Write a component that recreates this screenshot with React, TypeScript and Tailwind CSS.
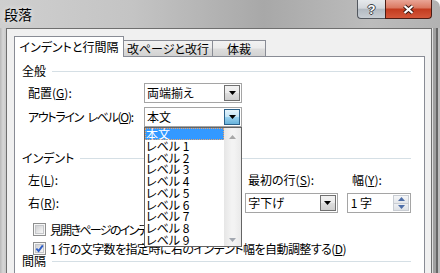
import React from "react";

const Tri = ({ color = "#000" }: { color?: string }) => (
  <svg width="7" height="4" viewBox="0 0 7 4">
    <polygon points="0,0 7,0 3.5,4" fill={color} />
  </svg>
);

const SmallTri = ({ up, color }: { up?: boolean; color: string }) => (
  <svg width="7" height="4" viewBox="0 0 7 4">
    <polygon points={up ? "0,4 7,4 3.5,0" : "0,0 7,0 3.5,4"} fill={color} />
  </svg>
);

const U = ({ c }: { c: string }) => (
  <span className="underline underline-offset-[1px]">{c}</span>
);

function Section({ label, className = "" }: { label: string; className?: string }) {
  return (
    <div className={`flex items-center ${className}`}>
      <span className="whitespace-nowrap">{label}</span>
      <div className="ml-[6px] h-px flex-1 bg-[#d5dfe5]" />
    </div>
  );
}

function Select({
  text,
  className = "",
  focused = false,
  children,
}: {
  text: string;
  className?: string;
  focused?: boolean;
  children?: React.ReactNode;
}) {
  return (
    <div className={`relative flex h-[20px] items-stretch border border-[#a5a5a5] bg-white ${className}`}>
      <span className="flex flex-1 items-center whitespace-nowrap pl-[2px]">{text}</span>
      <div
        className={
          focused
            ? "my-px mr-px flex w-[16px] items-center justify-center border border-[#2c628b] bg-[linear-gradient(180deg,#e5f4fc_0%,#c4e5f6_48%,#98d1ef_52%,#68b3db_100%)]"
            : "my-px mr-px flex w-[16px] items-center justify-center border border-[#707070] bg-[linear-gradient(180deg,#f2f2f2_0%,#ebebeb_48%,#dddddd_52%,#cfcfcf_100%)]"
        }
      >
        <Tri />
      </div>
      {children}
    </div>
  );
}

function Spin({ text, className = "" }: { text: string; className?: string }) {
  return (
    <div className={`flex h-[20px] items-stretch border border-[#a5a5a5] bg-white ${className}`}>
      <span className="flex flex-1 items-center whitespace-nowrap pl-[3px]">{text}</span>
      <div className="my-px mr-px flex w-[16px] flex-col">
        <div className="flex flex-1 items-center justify-center border border-[#c9cdd3] bg-[linear-gradient(180deg,#f5f6f8,#e3e6ea)]">
          <SmallTri up color="#4e6ea8" />
        </div>
        <div className="flex flex-1 items-center justify-center border border-t-0 border-[#c9cdd3] bg-[linear-gradient(180deg,#eef0f3,#dde1e6)]">
          <SmallTri color="#4e6ea8" />
        </div>
      </div>
    </div>
  );
}

function Check({ checked = false }: { checked?: boolean }) {
  return (
    <div className="relative flex h-[13px] w-[13px] shrink-0 items-center justify-center border border-[#8e8f8f] bg-[#f6f6f6]">
      <div className="h-[9px] w-[9px] border border-[#c4c6c9] bg-[linear-gradient(135deg,#cfd0d2,#f7f7f7)]" />
      {checked && (
        <svg className="absolute left-[1px] top-[1px]" width="9" height="9" viewBox="0 0 9 9">
          <path d="M1.3 4.6 L3.6 7 L7.8 1.4" fill="none" stroke="#2f5ec6" strokeWidth="1.9" />
        </svg>
      )}
    </div>
  );
}

const levels = ["本文", "レベル 1", "レベル 2", "レベル 3", "レベル 4", "レベル 5", "レベル 6", "レベル 7", "レベル 8", "レベル 9"];

export default function App() {
  return (
    <div className="relative flex h-[273px] w-[440px] flex-col overflow-hidden rounded-tr-[7px] bg-[linear-gradient(90deg,#cfcfcf_0%,#c4c4c4_30%,#a8a8a8_60%,#bcbcbc_84%,#b2b2b2_100%)] font-['Noto_Sans_CJK_JP',sans-serif] text-[12px] leading-none text-black [font-feature-settings:'palt']">
      {/* title bar */}
      <div className="flex h-[28px] shrink-0 items-start justify-between">
        <div className="pl-[4px] pt-[7px] text-[14px] leading-none [text-shadow:0_0_5px_rgba(255,255,255,0.95)]">
          段落
        </div>
        <div className="mr-[8px] flex">
          <div className="flex h-[19px] w-[28px] items-center justify-center rounded-bl-[4px] border border-r-0 border-t-0 border-[#52575e] bg-[linear-gradient(180deg,#e6e9ec_0%,#d3d7dc_45%,#b3bac2_52%,#c8ced4_100%)]">
            <span className="font-['Liberation_Sans',sans-serif] text-[13px] font-bold text-white [text-shadow:-1px_0_#3a3f46,1px_0_#3a3f46,0_-1px_#3a3f46,0_1px_#3a3f46]">
              ?
            </span>
          </div>
          <div className="flex h-[19px] w-[47px] items-center justify-center rounded-br-[4px] border border-t-0 border-[#4a1c14] bg-[linear-gradient(180deg,#e9a596_0%,#db7a63_42%,#c33c20_52%,#d4573a_100%)]">
            <svg width="13" height="11" viewBox="0 0 13 11">
              <path d="M2.5 2 L10.5 9 M10.5 2 L2.5 9" stroke="#3b1a14" strokeWidth="4.2" />
              <path d="M2.5 2 L10.5 9 M10.5 2 L2.5 9" stroke="#ffffff" strokeWidth="2.2" />
            </svg>
          </div>
        </div>
      </div>

      {/* body */}
      <div className="flex min-h-0 flex-1">
        <div className="w-[6px] shrink-0 bg-[linear-gradient(90deg,#b8b8b8,#d6d6d6_50%,#c9c9c9)]" />
        <div className="flex min-w-0 flex-1 flex-col overflow-hidden border-l border-r border-t border-[#6f6f6f] bg-[#f0f0f0] pl-[7px] pr-[6px] pt-[7px]">
          {/* tabs */}
          <div className="flex h-[20px] shrink-0 items-end">
            <div className="relative z-10 -mb-px flex h-[21px] w-[110px] items-center justify-center whitespace-nowrap border border-b-0 border-[#898c95] bg-white">
              インデントと行間隔
            </div>
            <div className="flex h-[16px] w-[89px] items-center justify-center whitespace-nowrap border-r border-t border-[#898c95] bg-[linear-gradient(180deg,#f2f2f2_0%,#ebebeb_48%,#dddddd_52%,#d2d2d2_100%)]">
              改ページと改行
            </div>
            <div className="flex h-[16px] w-[53px] items-center justify-center whitespace-nowrap border-r border-t border-[#898c95] bg-[linear-gradient(180deg,#f2f2f2_0%,#ebebeb_48%,#dddddd_52%,#d2d2d2_100%)]">
              体裁
            </div>
          </div>

          {/* panel */}
          <div className="h-[240px] shrink-0 border border-[#898c95] bg-white pl-[7px] pr-[13px] pt-[7px]">
            <Section label="全般" className="h-[14px]" />

            <div className="mt-[5px] flex h-[20px] items-center pl-[6px]">
              <span className="w-[116px] shrink-0 whitespace-nowrap">
                配置(<U c="G" />):
              </span>
              <Select text="両端揃え" className="w-[98px]" />
            </div>

            <div className="mt-[4px] flex h-[20px] items-center pl-[6px]">
              <span className="w-[116px] shrink-0 whitespace-nowrap tracking-[-1.3px]">
                アウトライン<span className="pr-[3px]"> </span>レベル(<U c="O" />):
              </span>
              <Select text="本文" focused className="z-20 w-[98px]">
                <div className="absolute left-[-1px] top-[19px] z-20 flex h-[120px] w-[98px] border border-[#646464] bg-white">
                  <div className="flex flex-1 flex-col">
                    {levels.map((t, i) => (
                      <div
                        key={t}
                        className={
                          i === 0
                            ? "flex h-[11.8px] items-center whitespace-nowrap bg-[#3399ff] pl-px text-white outline-1 -outline-offset-1 outline-dotted outline-[#e9a46a]"
                            : "flex h-[11.8px] items-center whitespace-nowrap pl-px"
                        }
                      >
                        {t}
                      </div>
                    ))}
                  </div>
                  <div className="flex w-[17px] flex-col items-center justify-between bg-[linear-gradient(90deg,#e6e6e6,#f3f3f3_45%,#f3f3f3_60%,#e9e9e9)] pb-[4px] pt-[7px]">
                    <SmallTri up color="#a7a7a7" />
                    <SmallTri color="#a3a8b0" />
                  </div>
                </div>
              </Select>
            </div>

            <Section label="インデント" className="mt-[24px] h-[14px]" />

            <div className="mt-[5px] flex h-[20px] items-center pl-[6px]">
              <span className="w-[116px] shrink-0 whitespace-nowrap">
                左(<U c="L" />):
              </span>
              <Spin text="0 字" className="w-[66px]" />
              <span className="ml-[38px] w-[104px] shrink-0 whitespace-nowrap">
                最初の行(<U c="S" />):
              </span>
              <span className="whitespace-nowrap">
                幅(<U c="Y" />):
              </span>
            </div>

            <div className="mt-[3px] flex h-[20px] items-center pl-[6px]">
              <span className="w-[116px] shrink-0 whitespace-nowrap">
                右(<U c="R" />):
              </span>
              <Spin text="0 字" className="w-[66px]" />
              <Select text="字下げ" className="ml-[37px] w-[95px]" />
              <Spin text="1 字" className="ml-[9px] w-[66px]" />
            </div>

            <div className="mt-[10px] flex h-[13px] items-center pl-[11px]">
              <Check />
              <span className="ml-[4px] whitespace-nowrap tracking-[-1.7px]">
                見開きページのインデント幅を設定する(<U c="M" />)
              </span>
            </div>

            <div className="mt-[6px] flex h-[13px] items-center pl-[11px]">
              <Check checked />
              <span className="ml-[4px] whitespace-nowrap tracking-[-0.55px]">
                1 行の文字数を指定時に右のインデント幅を自動調整する(<U c="D" />)
              </span>
            </div>

            <Section label="間隔" className="h-[12px]" />
          </div>
        </div>
        <div className="w-[8px] shrink-0 bg-[linear-gradient(90deg,#e0e0e0_0px,#e0e0e0_1px,#a0a0a0_1px,#a0a0a0_4px,#676767_4px,#676767_6px,#bdbdbd_6px)]" />
      </div>
    </div>
  );
}
